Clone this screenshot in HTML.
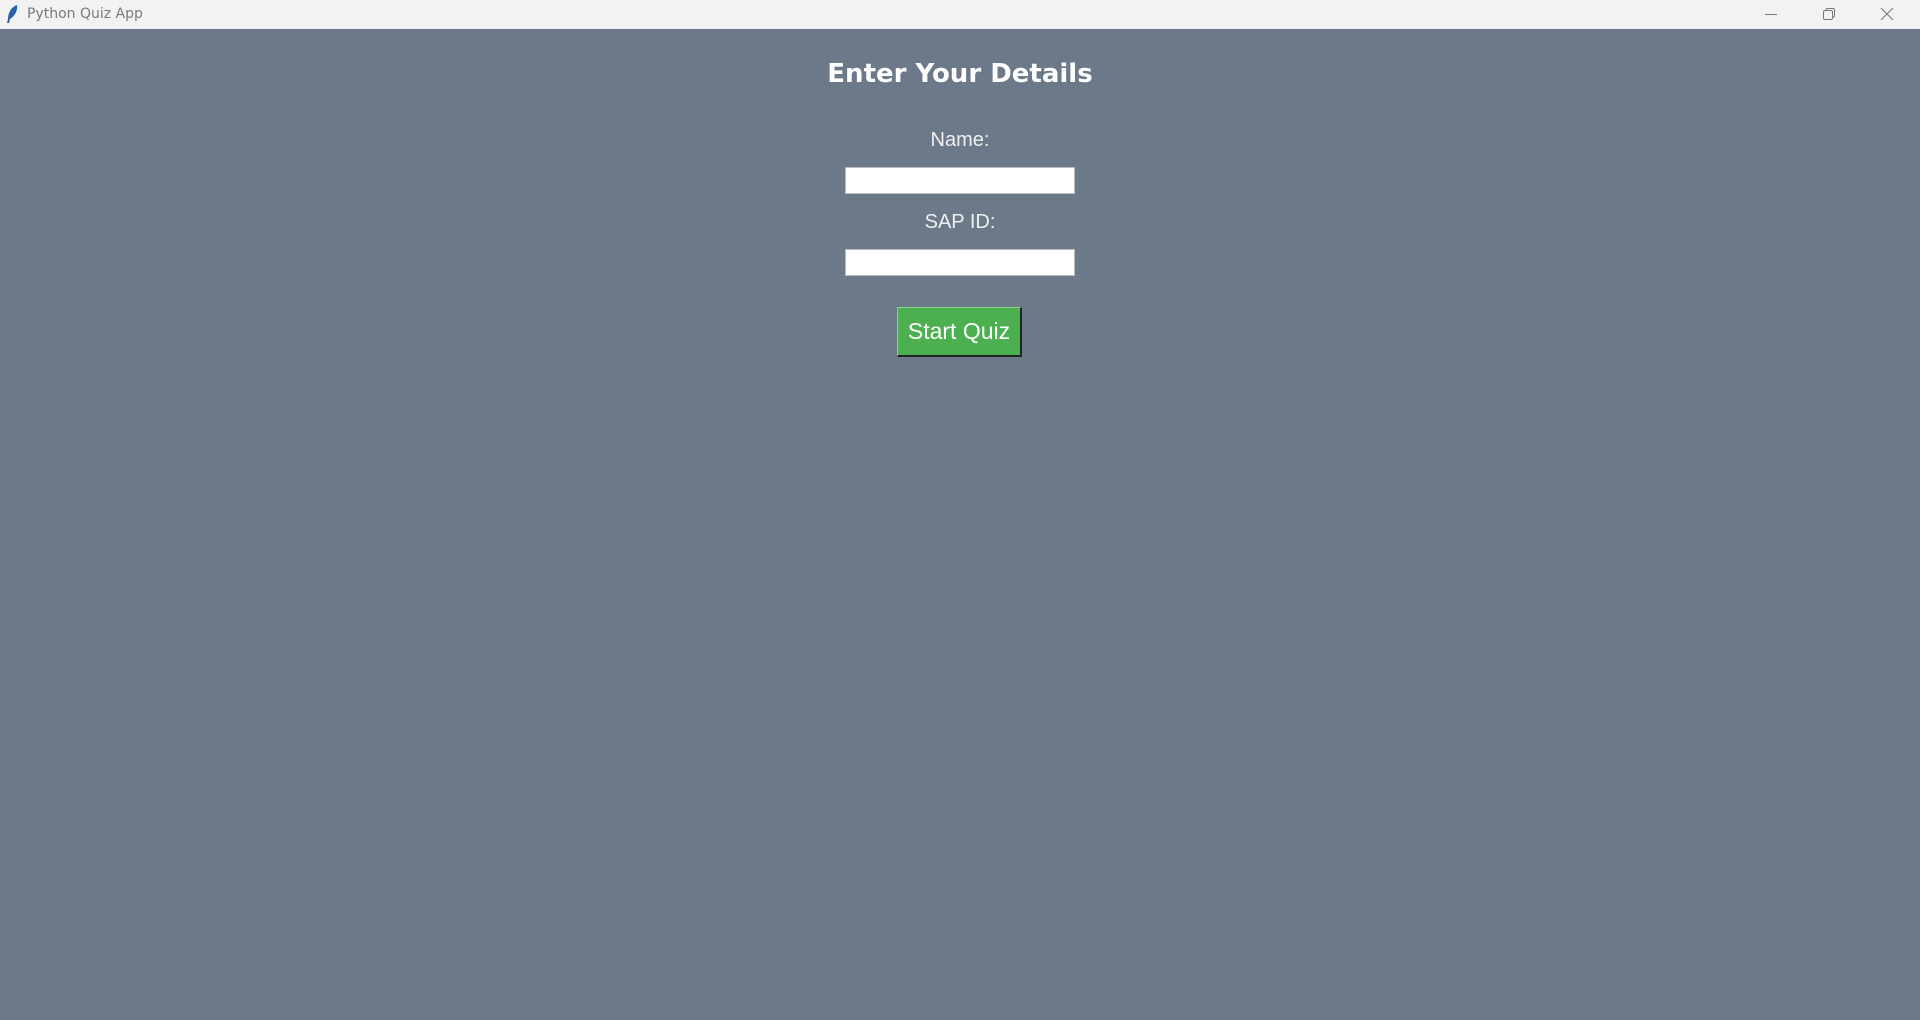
<!DOCTYPE html>
<html><head><style>
body{margin:0;width:1920px;height:1020px;overflow:hidden;background:#6b7989;font-family:"Liberation Sans",sans-serif;position:relative}
.tb{position:absolute;left:0;top:0;width:1920px;height:29px;background:#f2f2f2}
.tb span{position:absolute;left:27px;top:6px;font-size:14px;color:#7a7a7a;font-family:"DejaVu Sans","Liberation Sans",sans-serif}
.abs{position:absolute}
h1{position:absolute;left:0;width:1920px;top:59px;margin:0;text-align:center;font:bold 26px "DejaVu Sans",sans-serif;color:#fff}
.lbl{position:absolute;left:0;width:1920px;text-align:center;color:#f0f0f0;font-size:20px}
.ent{position:absolute;left:845px;width:228px;height:25px;background:#fff;border:1px solid #bbb}
.btn{position:absolute;left:897px;top:307px;width:122px;height:47px;background:#4caf50;border-top:1px solid #8fd18f;border-left:1px solid #8fd18f;border-right:2px solid #222;border-bottom:2px solid #222;color:#fff;font-size:23px;text-align:center;line-height:47px}
</style></head><body>
<div class="tb"><svg class="abs" style="left:5px;top:4px" width="14" height="20" viewBox="0 0 14 20"><path d="M12 1 C6 3 3 9 3 15 L2 19 L4 19 L5 15 C10 12 13 6 12 1Z" fill="#2b5fa8"/></svg><span>Python Quiz App</span>
<svg class="abs" style="left:1764px;top:8px" width="14" height="14"><path d="M1 6.5H13" stroke="#777"/></svg>
<svg class="abs" style="left:1822px;top:7px" width="14" height="14"><rect x="1.5" y="3.5" width="9" height="9" rx="1.5" fill="none" stroke="#777"/><path d="M4 3.5V2.5Q4 1.5 5 1.5H11Q12.5 1.5 12.5 3V9Q12.5 10 11 10" fill="none" stroke="#777"/></svg>
<svg class="abs" style="left:1880px;top:7px" width="14" height="14"><path d="M1 1L13 13M13 1L1 13" stroke="#777"/></svg>
</div>
<h1>Enter Your Details</h1>
<div class="lbl" style="top:129px">Name:</div>
<div class="ent" style="top:167px"></div>
<div class="lbl" style="top:211px">SAP ID:</div>
<div class="ent" style="top:249px"></div>
<div class="btn">Start Quiz</div>
</body></html>
